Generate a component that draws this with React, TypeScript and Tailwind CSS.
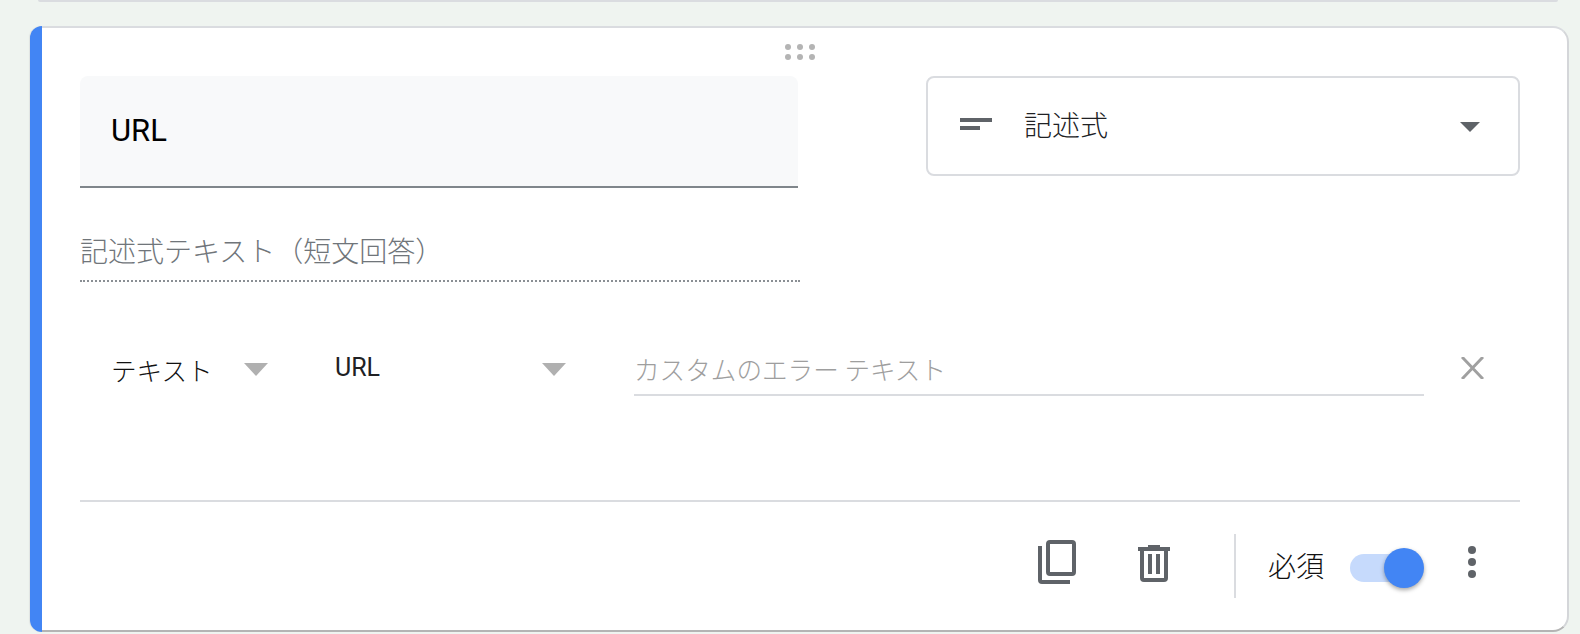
import React from "react";

const jp = { fontFamily: '"Noto Sans CJK JP", sans-serif' };

const Arrow = ({ color, w, h }: { color: string; w: number; h: number }) => (
  <svg width={w} height={h} viewBox="0 0 10 5" preserveAspectRatio="none" className="shrink-0">
    <path d="M0 0h10L5 5z" fill={color} />
  </svg>
);

const DragHandle = () => (
  <div className="grid grid-cols-3 gap-x-[6px] gap-y-[4px] mr-[10px]">
    {[0, 1, 2, 3, 4, 5].map((i) => (
      <span key={i} className="w-[6px] h-[6px] rounded-full bg-[#b4b4b4]" />
    ))}
  </div>
);

const CopyIcon = () => (
  <svg width="38" height="44" viewBox="0 0 38 44" fill="none" className="shrink-0">
    <rect x="10" y="2" width="26" height="32" rx="2" stroke="#5f6368" strokeWidth="4" />
    <path d="M2 6v34a2 2 0 0 0 2 2h28" stroke="#5f6368" strokeWidth="4" />
  </svg>
);

const TrashIcon = () => (
  <svg width="32" height="37" viewBox="0 0 32 37" fill="none" className="shrink-0">
    <path d="M10 0h12v2h10v4H0V2h10z" fill="#5f6368" />
    <path d="M4 5v28a2 2 0 0 0 2 2h20a2 2 0 0 0 2-2V5" stroke="#5f6368" strokeWidth="4" />
    <path d="M10 9h4v20h-4zM18 9h4v20h-4z" fill="#5f6368" />
  </svg>
);

export default function App() {
  return (
    <div className="w-[1580px] h-[634px] overflow-hidden bg-[#eff4f0]" style={jp}>
      <div className="ml-[38px] mr-[22px] h-[2px] bg-[#dadce0] rounded-b" />
      <div className="mt-[24px] ml-[30px] w-[1539px] h-[606px] flex">
        <div className="w-[12px] shrink-0 rounded-l-2xl bg-[#4285f4] shadow-[-1px_0_1px_#dfe3e1]" />
        <div className="flex-1 rounded-r-2xl bg-white border-t-2 border-r-2 border-b-2 border-t-[#dadce0] border-r-[#d4d6d9] border-b-[#b4b4b4]">
          <div className="flex justify-center items-start pt-[16px] h-[48px]">
            <DragHandle />
          </div>
          <div className="pl-[38px] pr-[47px]">
            <div className="flex justify-between items-start">
              <div className="w-[718px] h-[112px] rounded-t-lg bg-[#f8f9fa] border-b-2 border-[#80868b] pl-[31px] pt-[33px]">
                <span className="text-[31px] leading-[44px] text-black" style={{ fontFamily: "Roboto, sans-serif" }}>URL</span>
              </div>
              <div className="w-[594px] h-[100px] rounded-lg border-2 border-[#dadce0] flex items-center pl-[32px] pr-[38px]">
                <div className="w-[32px] shrink-0 mb-[4px]">
                  <div className="h-[4px] bg-[#5f6368]" />
                  <div className="h-[4px] w-[20px] mt-[4px] bg-[#5f6368]" />
                </div>
                <span className="ml-[32px] mb-[4px] text-[28px] leading-[40px] text-[#202124] font-light">記述式</span>
                <div className="ml-auto mt-[2px]">
                  <Arrow color="#5f6368" w={20} h={10} />
                </div>
              </div>
            </div>
            <div className="mt-[37px] w-[720px] h-[57px] border-b-2 border-dotted border-[#8a8f94] text-[28px] leading-[50px] text-[#70757a] font-light whitespace-nowrap">
              記述式テキスト（短文回答）
            </div>
            <div className="mt-[58px] h-[56px] flex items-start">
              <span className="ml-[31px] w-[101px] text-[25.6px] leading-[60px] text-[#111] font-light whitespace-nowrap">テキスト</span>
              <div className="ml-[32px] mt-[23px]">
                <Arrow color="#b0b0b0" w={24} h={13} />
              </div>
              <span className="ml-[67px] w-[207px] text-[25px] leading-[56px] text-[#202124]" style={{ fontFamily: "Roboto, sans-serif" }}>URL</span>
              <div className="mt-[23px]">
                <Arrow color="#b0b0b0" w={24} h={13} />
              </div>
              <div className="ml-[68px] w-[790px] h-[56px] border-b-2 border-[#dadce0] text-[25.6px] leading-[58px] text-[#9e9e9e] font-light whitespace-nowrap">
                カスタムのエラー テキスト
              </div>
              <svg width="23" height="22" viewBox="0 0 23 22" className="ml-[37px] mt-[17px] shrink-0">
                <path d="M1 0l21 22M22 0L1 22" stroke="#a0a0a0" strokeWidth="3" />
              </svg>
            </div>
            <div className="mt-[104px] h-[2px] bg-[#dadce0]" />
            <div className="mt-[32px] h-[64px] flex items-center justify-end pr-[44px]">
              <div className="mb-[8px]">
                <CopyIcon />
              </div>
              <div className="ml-[62px] mb-[6px]">
                <TrashIcon />
              </div>
              <div className="ml-[64px] w-[2px] h-[64px] bg-[#dadce0]" />
              <span className="ml-[32px] mb-[3px] text-[28px] leading-[40px] text-[#111] font-light">必須</span>
              <div className="ml-[26px] mt-[4px] relative w-[60px] h-[28px] rounded-full bg-[#c6dafc]">
                <div className="absolute left-[34px] top-[-6px] w-[40px] h-[40px] rounded-full bg-[#4285f4] shadow-[0_2px_4px_rgba(0,0,0,0.35)]" />
              </div>
              <div className="ml-[58px] mb-[8px] flex flex-col gap-[4px]">
                <span className="w-[8px] h-[8px] rounded-full bg-[#5f6368]" />
                <span className="w-[8px] h-[8px] rounded-full bg-[#5f6368]" />
                <span className="w-[8px] h-[8px] rounded-full bg-[#5f6368]" />
              </div>
            </div>
          </div>
        </div>
      </div>
    </div>
  );
}
